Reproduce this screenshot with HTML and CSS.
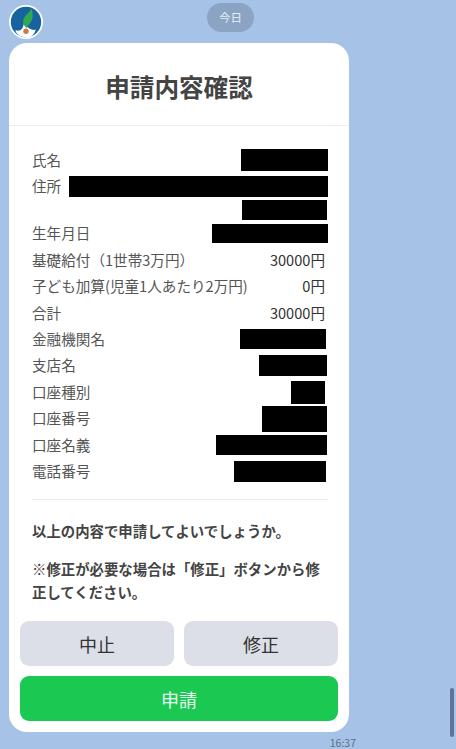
FILE: index.html
```html
<!DOCTYPE html>
<html lang="ja">
<head>
<meta charset="utf-8">
<title>申請内容確認</title>
<link rel="stylesheet" href="styles.css">
</head>
<body>
<div class="chat">
  <div class="top">
    <svg class="avatar" viewBox="0 0 34 34" aria-hidden="true">
      <circle cx="17" cy="17" r="17" fill="#fff"/>
      <circle cx="17" cy="17" r="15.2" fill="#17639f"/>
      <path d="M17 32.2c-6 0-10-3.4-10.6-7.2 2.2 1.2 5 .8 6.6-1.2 1.2-1.6 1.6-3.8 2-5.8.6 2 3 4 5.4 5.6 2.2 1.4 4.6 1.8 6.4 1-1 4.4-4.4 8.2-9.8 8.2z" fill="#fff"/>
      <path d="M22.6 3.4c.9 3.6 1.6 6.6.9 9.8-.8 3.6-4 6.2-5.8 9.8-1.2-1.4-3.6-3-3.6-6.6 0-4.8 5.6-8.2 8.5-13z" fill="#2fa84f"/>
      <circle cx="17" cy="26.2" r="2.7" fill="#cf7a3c"/>
    </svg>
    <div class="date">今日</div>
  </div>
  <main class="card">
    <header class="head"><h1>申請内容確認</h1></header>
    <section class="body">
      <div class="rows">
        <div class="row"><span>氏名</span><i class="mask m-name"></i></div>
        <div class="row"><span>住所</span><i class="mask m-addr"></i></div>
        <div class="row row-extra"><i class="mask m-addr2"></i></div>
        <div class="row"><span>生年月日</span><i class="mask m-birth"></i></div>
        <div class="row"><span>基礎給付（1世帯3万円）</span><b>30000円</b></div>
        <div class="row"><span>子ども加算(児童1人あたり2万円)</span><b>0円</b></div>
        <div class="row"><span>合計</span><b>30000円</b></div>
        <div class="row"><span>金融機関名</span><i class="mask m-bank"></i></div>
        <div class="row"><span>支店名</span><i class="mask m-branch"></i></div>
        <div class="row"><span>口座種別</span><i class="mask m-type"></i></div>
        <div class="row"><span>口座番号</span><i class="mask m-number"></i></div>
        <div class="row"><span>口座名義</span><i class="mask m-holder"></i></div>
        <div class="row"><span>電話番号</span><i class="mask m-phone"></i></div>
      </div>
      <hr class="rule">
      <p class="ask">以上の内容で申請してよいでしょうか。</p>
      <p class="note">※修正が必要な場合は「修正」ボタンから修正してください。</p>
    </section>
    <div class="actions">
      <button class="btn btn-gray">中止</button>
      <button class="btn btn-gray">修正</button>
      <button class="btn btn-green">申請</button>
    </div>
  </main>
  <time class="time">16:37</time>
</div>
<div class="scrollbar"></div>
</body>
</html>
```
FILE: styles.css
```css
* { box-sizing: border-box; }
html, body { margin: 0; height: 749px; overflow: hidden; }
body {
  background: #a6c2e6;
  font-family: "Noto Sans CJK JP", "Noto Sans", sans-serif;
  color: #555;
  position: relative;
}
.chat { width: 349px; margin-left: 9px; display: flex; flex-direction: column; }
.top { height: 43px; display: flex; align-items: flex-start; }
.avatar { width: 34px; height: 34px; margin-top: 5px; flex: none; }
.date {
  margin: 3px 0 0 164px;
  width: 47px;
  height: 29px;
  border-radius: 15px;
  background: #8ca4c3;
  color: #e8eef6;
  font-size: 11.5px;
  line-height: 29px;
  text-align: center;
}
.card {
  width: 340px;
  height: 689px;
  background: #fff;
  border-radius: 18px;
  display: flex;
  flex-direction: column;
}
.head { height: 83px; border-bottom: 1.5px solid #eee; display: flex; align-items: center; justify-content: center; padding-top: 4px; }
h1 { margin: 0; font-size: 24.6px; font-weight: 700; color: #444; line-height: 1; }
.body { padding: 21px 21px 0 23px; flex: 1; }
.rows { display: flex; flex-direction: column; }
.row {
  height: 26.45px;
  display: flex;
  align-items: center;
  justify-content: space-between;
  font-size: 14.6px;
  line-height: 1;
  white-space: nowrap;
  padding-right: 3px;
  margin-right: -3px;
}
.row b { font-weight: 400; color: #333; font-size: 14.6px; margin-right: 3px; }
.row-extra { height: 20.5px; justify-content: flex-end; }
.mask { display: block; background: #000; flex: none; }
.m-name { width: 87px; height: 22px; }
.m-addr { width: 259px; height: 21px; }
.m-addr2 { width: 85px; height: 20px; margin-right: 1px; }
.m-birth { width: 116px; height: 19px; }
.m-bank { width: 86px; height: 20px; margin-right: 2px; }
.m-branch { width: 68px; height: 21px; margin-right: 1px; }
.m-type { width: 34px; height: 23px; margin-right: 3px; }
.m-number { width: 65px; height: 26px; margin-right: 1px; }
.m-holder { width: 111px; height: 20px; margin-right: 1px; }
.m-phone { width: 92px; height: 21px; margin-right: 2px; }
.rule { border: 0; border-top: 1px solid #eaeaea; margin: 14px 0 0; }
.ask, .note { margin: 0; font-size: 14.4px; font-weight: 700; color: #444; line-height: 23px; }
.ask { margin-top: 19px; }
.note { margin-top: 15px; }
.actions {
  display: grid;
  grid-template-columns: 154px 154px;
  grid-auto-rows: 45px;
  gap: 10px;
  padding: 0 11px 11px;
}
.btn {
  border: 0;
  border-radius: 9px;
  font-family: inherit;
  font-size: 18px;
  padding: 0;
}
.btn-gray { background: #dcdfe7; color: #333; }
.btn-green { grid-column: 1 / -1; background: #1bc952; color: #e9fbef; }
.time { align-self: flex-end; margin: 5px 2px 0 0; font-size: 10.5px; line-height: 12px; color: #5f6f85; }
.scrollbar {
  position: absolute;
  left: 450px;
  top: 688px;
  width: 4px;
  height: 49px;
  border-radius: 2px;
  background: #5f7396;
}
```
